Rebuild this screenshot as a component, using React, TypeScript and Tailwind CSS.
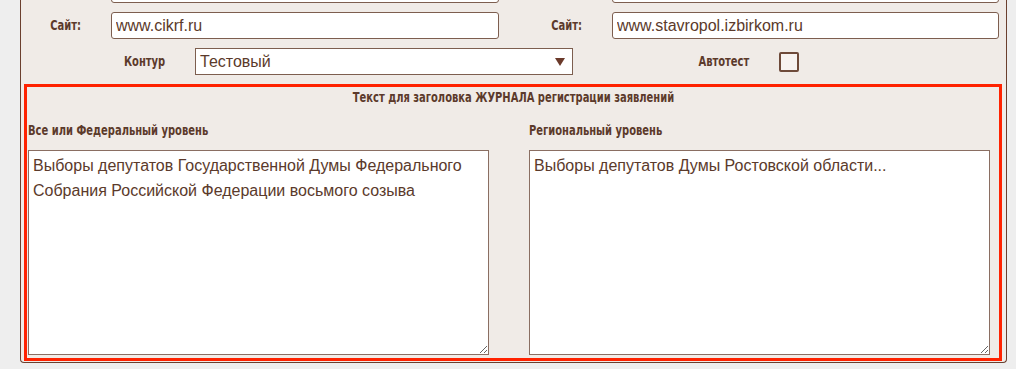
import React from 'react';

const labelFont = { fontFamily: '"DejaVu Sans Condensed", "DejaVu Sans", sans-serif' };
const textFont = { fontFamily: '"Liberation Sans", Arial, sans-serif' };

// condensed bold caption, squeezed a bit to match the narrow face in the original
const Caption: React.FC<{ origin: string; children?: React.ReactNode }> = ({ origin, children }) => (
  <span className={`inline-block scale-x-[0.79] whitespace-nowrap ${origin}`}>{children}</span>
);

const Label: React.FC<{ width: string; children?: React.ReactNode }> = ({ width, children }) => (
  <div className={`${width} shrink-0 pr-[30px] text-right text-[14px] font-bold text-[#5c3a2b]`} style={labelFont}>
    <Caption origin="origin-right">{children}</Caption>
  </div>
);

const TextInput: React.FC<{ width: string; value: string }> = ({ width, value }) => (
  <input
    type="text"
    readOnly
    value={value}
    className={`${width} h-[27px] shrink-0 rounded-[3px] border border-[#7d5e4f] bg-white px-[4px] text-[16px] text-[#5b3a2b] outline-none`}
    style={textFont}
  />
);

export default function App() {
  return (
    <div className="h-[369px] w-[1016px] overflow-hidden bg-[#eeeeee]">
      <div className="ml-[20px] -mt-[24px] w-[987px] rounded-b-[4px] border-x border-b border-[#6b3f2e] bg-[#f0ebe7] pb-px">
        {/* Row above the visible area, only its bottom edge shows */}
        <div className="flex h-[27px] items-center">
          <Label width="w-[90px]" />
          <TextInput width="w-[388px]" value="" />
          <Label width="w-[113px]" />
          <TextInput width="w-[387px]" value="" />
        </div>

        {/* Site row */}
        <div className="mt-[9px] flex h-[27px] items-center">
          <Label width="w-[90px]">Сайт:</Label>
          <TextInput width="w-[388px]" value="www.cikrf.ru" />
          <Label width="w-[113px]">Сайт:</Label>
          <TextInput width="w-[387px]" value="www.stavropol.izbirkom.ru" />
        </div>

        {/* Contour row */}
        <div className="mt-[9px] flex h-[27px] items-center">
          <Label width="w-[174px]">Контур</Label>
          <div className="flex h-[27px] w-[378px] shrink-0 items-center justify-between border border-[#7d5e4f] bg-white pl-[4px] pr-[7px]">
            <span className="text-[16px] text-[#5b3a2b]" style={textFont}>Тестовый</span>
            <svg width="10" height="8" viewBox="0 0 10 8">
              <path d="M0 0 L10 0 L5 8 Z" fill="#6b3a2a" />
            </svg>
          </div>
          <Label width="w-[206px]">Автотест</Label>
          <div className="h-[20px] w-[20px] shrink-0 rounded-[2px] border-2 border-[#6e4a3a] bg-[#f7f3f1]" />
        </div>

        {/* Journal header box */}
        <div className="mt-[9px] ml-[3px] mr-[4px] border-[3px] border-[#ff2200] pb-[3px]">
          <div className="text-center text-[14px] font-bold leading-[20px] text-[#5c3a2b]" style={labelFont}>
            <Caption origin="origin-center">Текст для заголовка ЖУРНАЛА регистрации заявлений</Caption>
          </div>
          <div className="mt-[13px] flex gap-[40px] pl-px">
            <div className="flex w-[461px] flex-col">
              <div className="text-[14px] font-bold leading-[20px] text-[#5c3a2b]" style={labelFont}>
                <Caption origin="origin-left">Все или Федеральный уровень</Caption>
              </div>
              <textarea
                readOnly
                className="mt-[10px] h-[205px] w-[461px] border border-[#8a6e62] bg-white px-[4px] pt-[2px] text-[16px] leading-[25px] text-[#5b3a2b] outline-none"
                style={textFont}
                value="Выборы депутатов Государственной Думы Федерального Собрания Российской Федерации восьмого созыва"
              />
            </div>
            <div className="flex w-[461px] flex-col">
              <div className="text-[14px] font-bold leading-[20px] text-[#5c3a2b]" style={labelFont}>
                <Caption origin="origin-left">Региональный уровень</Caption>
              </div>
              <textarea
                readOnly
                className="mt-[10px] h-[205px] w-[461px] border border-[#8a6e62] bg-white px-[4px] pt-[2px] text-[16px] leading-[25px] text-[#5b3a2b] outline-none"
                style={textFont}
                value="Выборы депутатов Думы Ростовской области..."
              />
            </div>
          </div>
        </div>
      </div>
    </div>
  );
}
